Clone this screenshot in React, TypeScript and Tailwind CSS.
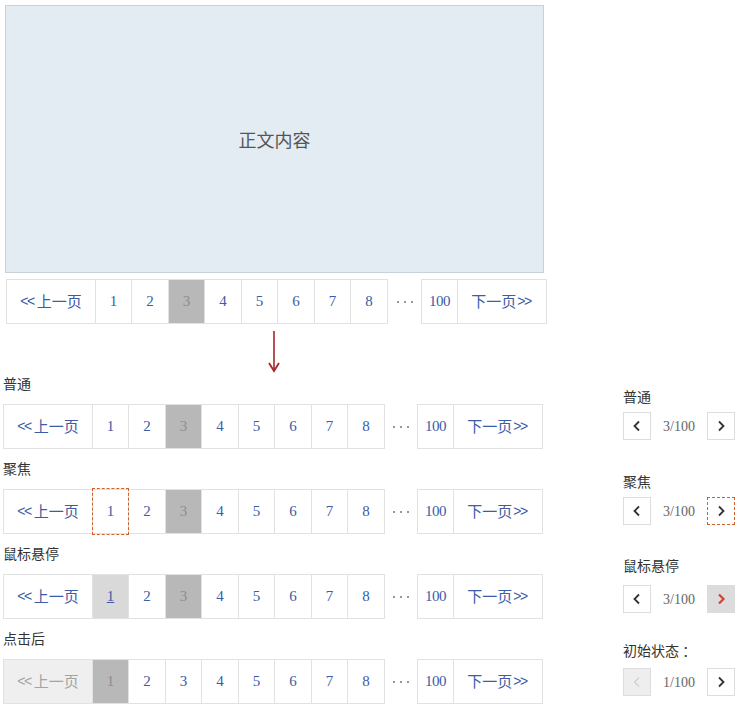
import React from 'react'

type State = 'normal' | 'focus' | 'hover' | 'clicked'

const cn = "font-['Noto_Sans_CJK_SC','Noto_Sans',sans-serif]"
const num = "font-['Liberation_Serif','Noto_Sans_CJK_SC',serif]"
const arrows = "font-['Liberation_Sans',sans-serif] text-[14px] tracking-[-1.5px]"
const widths = [36, 37, 36, 37, 36, 37, 36, 37]

function Pager({ state = 'normal' }: { state?: State }) {
  const current = state === 'clicked' ? 1 : 3
  const prevDisabled = state === 'clicked'

  return (
    <div className="flex items-stretch h-[45px]">
      <div className="flex border-l border-y border-[#e2e2e2]">
        <div
          className={`w-[89px] border-r border-[#e2e2e2] flex items-center justify-center text-[15px] ${cn} ${prevDisabled ? 'bg-[#efefef] text-[#a3a3a3]' : 'text-[#3b5ca6]'}`}
        >
          <span className={`${arrows} mr-[3px]`}>&lt;&lt;</span>
          上一页
        </div>
        {widths.map((w, i) => {
          const n = i + 1
          const isCurrent = n === current
          const isFocus = state === 'focus' && n === 1
          const isHover = state === 'hover' && n === 1
          return (
            <div
              key={n}
              style={{ width: w }}
              className={`relative border-r border-[#e2e2e2] flex items-center justify-center text-[15px] ${num} ${
                isCurrent ? 'bg-[#b8b8b8] text-[#8e8e8e]' : isHover ? 'bg-[#d9d9d9] text-[#3b5ca6] underline' : 'text-[#3b5ca6]'
              }`}
            >
              {n}
              {isFocus && (
                <span className="absolute -top-[2px] -bottom-[2px] -left-px -right-px border border-dashed border-[#d0602a]" />
              )}
            </div>
          )
        })}
      </div>
      <div className="w-[33px] flex items-center justify-center gap-[5px]">
        <span className="w-[2px] h-[2px] bg-[#999]" />
        <span className="w-[2px] h-[2px] bg-[#999]" />
        <span className="w-[2px] h-[2px] bg-[#999]" />
      </div>
      <div className="flex border-l border-y border-[#e2e2e2]">
        <div className={`w-[36px] border-r border-[#e2e2e2] flex items-center justify-center text-[15px] tracking-[-0.5px] text-[#3b5ca6] ${num}`}>
          100
        </div>
        <div className={`w-[89px] border-r border-[#e2e2e2] flex items-center justify-center text-[15px] text-[#3b5ca6] ${cn}`}>
          下一页
          <span className={`${arrows} ml-[1px] mr-[2px]`}>&gt;&gt;</span>
        </div>
      </div>
    </div>
  )
}

function Chevron({ dir, color, width = 1.6 }: { dir: 'left' | 'right'; color: string; width?: number }) {
  return (
    <svg width="10" height="12" viewBox="0 0 10 12">
      <polyline
        points={dir === 'left' ? '7,1.5 2.5,6 7,10.5' : '3,1.5 7.5,6 3,10.5'}
        fill="none"
        stroke={color}
        strokeWidth={width}
      />
    </svg>
  )
}

function MiniPager({ state, label, labelGap, top }: { state: State | 'initial'; label: string; labelGap: string; top: string }) {
  const initial = state === 'initial'
  return (
    <div className={top}>
      <div className={`h-4 leading-4 text-[14px] text-[#333] ${cn}`}>{label}</div>
      <div className={`flex items-center ${labelGap}`}>
        <div
          className={`w-[28px] h-[28px] border flex items-center justify-center ${
            initial ? 'bg-[#eeeeee] border-[#dddddd]' : 'bg-white border-[#dddddd]'
          }`}
        >
          <Chevron dir="left" color={initial ? '#b8b8b8' : '#333'} width={initial ? 1 : 1.8} />
        </div>
        <div className={`w-[56px] text-center text-[14px] text-[#666] ${num}`}>{initial ? '1/100' : '3/100'}</div>
        <div
          className={`relative w-[28px] h-[28px] flex items-center justify-center ${
            state === 'hover' ? 'bg-[#dcdcdc]' : state === 'focus' ? 'bg-white' : 'bg-white border border-[#dddddd]'
          }`}
        >
          <Chevron dir="right" color={state === 'hover' ? '#d2452c' : '#333'} width={state === 'hover' ? 2.2 : 1.8} />
          {state === 'focus' && <span className="absolute inset-0 border border-dashed border-[#d0602a]" />}
        </div>
      </div>
    </div>
  )
}

function Section({ label, state, first }: { label: string; state: State; first?: boolean }) {
  return (
    <div className={first ? '' : 'mt-[11px]'}>
      <div className={`h-4 leading-4 text-[14px] text-[#333] ${cn}`}>{label}</div>
      <div className="mt-[13px]">
        <Pager state={state} />
      </div>
    </div>
  )
}

export default function App() {
  return (
    <div className="w-[744px] h-[710px] bg-white pt-[5px] overflow-hidden">
      <div className="ml-[5px] w-[539px] h-[268px] border border-[#c8d2db] bg-[#e4ecf3] flex items-center justify-center">
        <span className={`text-[18px] text-[#555] ${cn}`}>正文内容</span>
      </div>
      <div className="ml-[6px] mt-[6px]">
        <Pager />
      </div>
      <div className="h-[51px] pl-[268px] pt-[7px]">
        <svg width="12" height="42" viewBox="0 0 12 42">
          <line x1="6" y1="0" x2="6" y2="38" stroke="#a8242a" strokeWidth="1.6" />
          <polyline points="1,32 6,40 11,32" fill="none" stroke="#a8242a" strokeWidth="1.8" />
        </svg>
      </div>
      <div className="flex">
        <div className="ml-[3px] w-[540px]">
          <Section label="普通" state="normal" first />
          <Section label="聚焦" state="focus" />
          <Section label="鼠标悬停" state="hover" />
          <Section label="点击后" state="clicked" />
        </div>
        <div className="ml-[80px]">
          <MiniPager label="普通" state="normal" top="mt-[13px]" labelGap="mt-[8px]" />
          <MiniPager label="聚焦" state="focus" top="mt-[33px]" labelGap="mt-[8px]" />
          <MiniPager label="鼠标悬停" state="hover" top="mt-[32px]" labelGap="mt-[12px]" />
          <MiniPager label="初始状态 ：" state="initial" top="mt-[29px]" labelGap="mt-[10px]" />
        </div>
      </div>
    </div>
  )
}
